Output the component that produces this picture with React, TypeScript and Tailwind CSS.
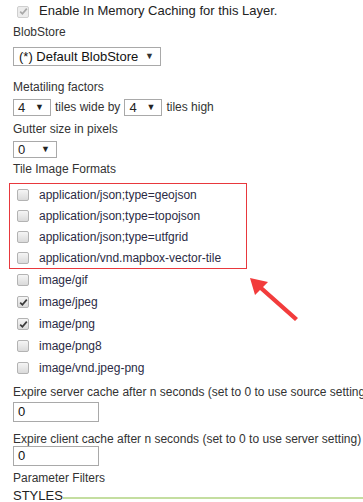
const Check = ({ checked = false, disabled = false }: { checked?: boolean; disabled?: boolean }) => (
  <div
    className={
      'flex h-[12px] w-[12px] shrink-0 items-center justify-center rounded-[2px] border ' +
      (disabled
        ? 'border-[#cfcfcf] bg-[#ececec]'
        : 'border-[#b3b3b3] bg-gradient-to-b from-[#f5f5f5] to-[#dadada]')
    }
  >
    {checked ? (
      <svg width="9" height="9" viewBox="0 0 9 9">
        <path
          d="M1.2 4.6 L3.4 6.8 L7.8 1.6"
          fill="none"
          stroke={disabled ? '#a8a8a8' : '#3a3a3a'}
          strokeWidth="1.7"
        />
      </svg>
    ) : null}
  </div>
)

const FakeSelect = ({ value, width }: { value: string; width: string }) => (
  <div
    className={`flex h-[17px] items-center justify-between border border-[#a9a9a9] bg-white pl-[4px] pr-[6px] ${width}`}
  >
    <span className="text-[13px] leading-none text-[#222]">{value}</span>
    <span className="text-[9px] leading-none text-[#222]">▼</span>
  </div>
)

const FormatRow = ({ label, checked = false }: { label: string; checked?: boolean }) => (
  <div className="flex h-[22px] items-center">
    <div className="ml-[4px] mr-[10px]">
      <Check checked={checked} />
    </div>
    <span className="text-[#2b2b45]">{label}</span>
  </div>
)

export default function App() {
  const boxed = [
    'application/json;type=geojson',
    'application/json;type=topojson',
    'application/json;type=utfgrid',
    'application/vnd.mapbox-vector-tile',
  ]
  const others = [
    { label: 'image/gif', checked: false },
    { label: 'image/jpeg', checked: true },
    { label: 'image/png', checked: true },
    { label: 'image/png8', checked: false },
    { label: 'image/vnd.jpeg-png', checked: false },
  ]

  return (
    <div
      className="relative h-[502px] w-[363px] overflow-hidden bg-white pl-[13px] text-[12px] text-[#333]"
      style={{ fontFamily: '"Liberation Sans", Arial, sans-serif' }}
    >
      <div className="flex h-[22px] items-center">
        <div className="ml-[4px] mr-[10px] mt-[1px]">
          <Check checked disabled />
        </div>
        <span className="whitespace-nowrap text-[13px] text-[#222]">
          Enable In Memory Caching for this Layer.
        </span>
      </div>

      <div className="h-[20px] leading-[20px]">BlobStore</div>
      <div className="mt-[5px] flex h-[19px] w-[148px] items-center justify-between border border-[#a9a9a9] pl-[5px] pr-[6px]">
        <span className="whitespace-nowrap text-[13px] leading-none text-[#111]">(*) Default BlobStore</span>
        <span className="text-[9px] leading-none">▼</span>
      </div>

      <div className="mt-[12px] h-[19px] leading-[19px]">Metatiling factors</div>
      <div className="mt-[1px] flex items-center">
        <FakeSelect value="4" width="w-[38px]" />
        <span className="mx-[4px]">tiles wide by</span>
        <FakeSelect value="4" width="w-[38px]" />
        <span className="ml-[4px]">tiles high</span>
      </div>

      <div className="mt-[3px] h-[20px] leading-[20px]">Gutter size in pixels</div>
      <div className="mt-[2px]">
        <FakeSelect value="0" width="w-[44px]" />
      </div>

      <div className="mt-[1px] h-[20px] leading-[20px]">Tile Image Formats</div>

      <div className="-ml-[4px] mt-[4px] w-[238px] border border-[#e8383d] pl-[7px]">
        {boxed.map((f) => (
          <div key={f} className="flex h-[21px] items-center">
            <div className="mr-[10px]">
              <Check />
            </div>
            <span className="text-[#2b2b45]">{f}</span>
          </div>
        ))}
      </div>

      <div>
        {others.map((o) => (
          <FormatRow key={o.label} label={o.label} checked={o.checked} />
        ))}
      </div>

      <div className="mt-[6px] h-[14px] whitespace-nowrap leading-[14px]">
        Expire server cache after n seconds (set to 0 to use source settings)
      </div>
      <div className="mt-[3px] flex h-[20px] w-[86px] items-center border border-[#a9a9a9] pl-[4px] text-[13px] text-[#111]">
        0
      </div>
      <div className="mt-[10px] h-[14px] whitespace-nowrap leading-[14px]">
        Expire client cache after n seconds (set to 0 to use server setting)
      </div>
      <div className="flex h-[20px] w-[86px] items-center border border-[#a9a9a9] pl-[4px] text-[13px] text-[#111]">
        0
      </div>
      <div className="mt-[5px] h-[14px] leading-[14px]">Parameter Filters</div>
      <div className="mt-[4px] flex items-center">
        <span className="text-[13px] leading-[14px] text-[#222]">STYLES</span>
        <div className="mt-[3px] h-0 flex-1 border-t-2 border-[#c4dea0]" />
      </div>

      <svg
        className="absolute left-[246px] top-[274px]"
        width="56"
        height="50"
        viewBox="0 0 56 50"
      >
        <path d="M4 4 L22 8 L17 13 L52 44 L49 47 L14 16 L9 21 Z" fill="#f23c3c" />
      </svg>
    </div>
  )
}
